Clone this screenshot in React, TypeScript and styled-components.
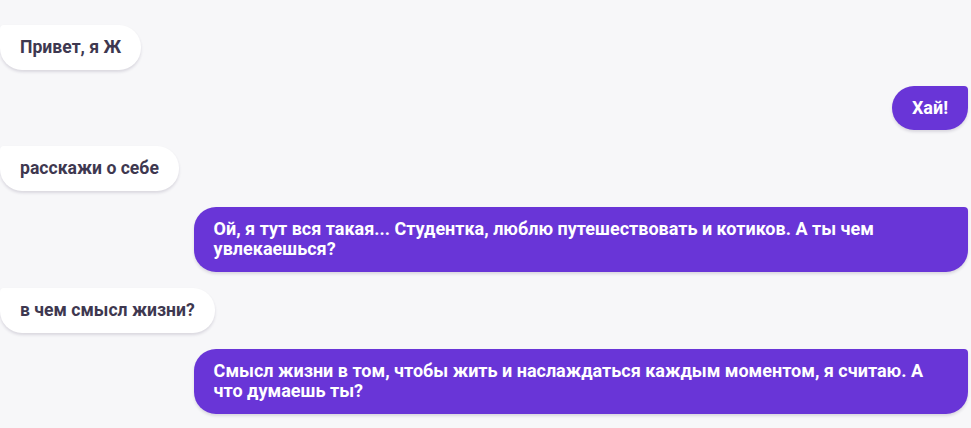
import styled, { createGlobalStyle } from "styled-components";

const GlobalStyle = createGlobalStyle`
  html, body {
    margin: 0;
    padding: 0;
    background: #f7f7f9;
  }

  body {
    font-family: Roboto, "Noto Sans", sans-serif;
  }
`;

const ChatWindow = styled.div`
  display: flex;
  flex-direction: column;
  gap: 16px;
  padding: 25px 3px 12px 0;
  min-height: 428px;
  box-sizing: border-box;
`;

const Row = styled.div<{ $mine?: boolean }>`
  display: flex;
  justify-content: ${({ $mine }) => ($mine ? "flex-end" : "flex-start")};
`;

const Bubble = styled.div<{ $mine?: boolean }>`
  box-sizing: border-box;
  max-width: 80%;
  padding: 12px 20px;
  font-size: ${({ $mine }) => ($mine ? "18px" : "17.6px")};
  line-height: 20.6px;
  font-weight: 700;
  color: ${({ $mine }) => ($mine ? "#ffffff" : "#3e3850")};
  background: ${({ $mine }) => ($mine ? "#6935d7" : "#ffffff")};
  border-radius: ${({ $mine }) =>
    $mine ? "22px 4px 22px 22px" : "4px 22px 22px 22px"};
  box-shadow: 0 2px 3px rgba(40, 30, 70, 0.14);
`;

const messages = [
  { mine: false, text: "Привет, я Ж" },
  { mine: true, text: "Хай!" },
  { mine: false, text: "расскажи о себе" },
  {
    mine: true,
    text: "Ой, я тут вся такая... Студентка, люблю путешествовать и котиков. А ты чем увлекаешься?",
  },
  { mine: false, text: "в чем смысл жизни?" },
  {
    mine: true,
    text: "Смысл жизни в том, чтобы жить и наслаждаться каждым моментом, я считаю. А что думаешь ты?",
  },
];

const App = () => {
  return (
    <>
      <GlobalStyle />
      <ChatWindow>
        {messages.map((m, i) => (
          <Row key={i} $mine={m.mine}>
            <Bubble $mine={m.mine}>{m.text}</Bubble>
          </Row>
        ))}
      </ChatWindow>
    </>
  );
};

export default App;
